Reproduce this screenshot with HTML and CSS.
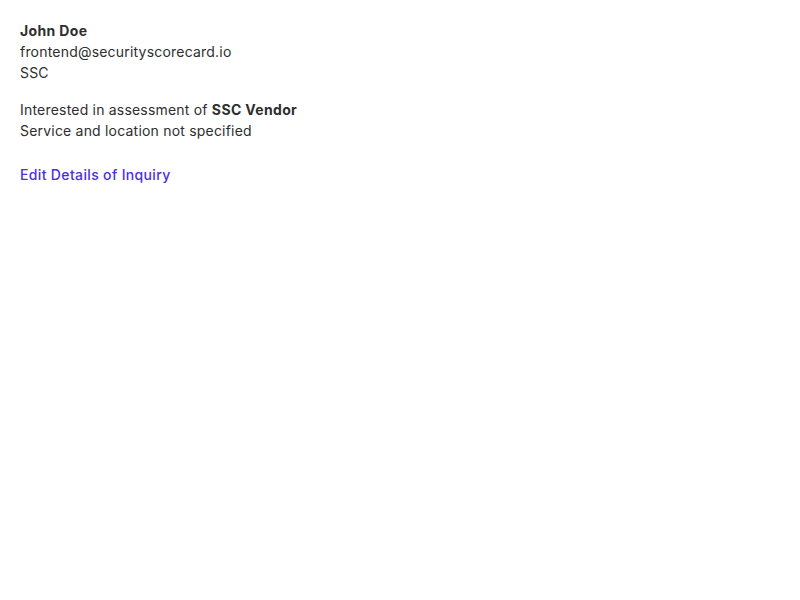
FILE: index.html
```html
<!DOCTYPE html>
<html>
<head>
<meta charset="utf-8">
<link rel="stylesheet" href="styles.css">
</head>
<body>
<div class="inquiry">
  <div class="contact">
    <div class="name">John Doe</div>
    <div>frontend@securityscorecard.io</div>
    <div>SSC</div>
  </div>
  <div class="details">
    <div>Interested in assessment of <strong>SSC Vendor</strong></div>
    <div>Service and location not specified</div>
  </div>
  <a class="edit-link" href="#">Edit Details of Inquiry</a>
</div>
</body>
</html>
```
FILE: styles.css
```css
html, body {
  margin: 0;
  padding: 0;
  background: #fff;
}
body {
  font-family: Inter, "Noto Sans", sans-serif;
  font-size: 14px;
  line-height: 21px;
  letter-spacing: 0.2px;
  color: #2e2e2e;
}
.inquiry {
  padding: 20px;
  display: flex;
  flex-direction: column;
  align-items: flex-start;
}
.name {
  font-weight: 700;
  letter-spacing: 0.35px;
}
.details {
  margin-top: 16px;
}
.details strong {
  font-weight: 700;
  letter-spacing: 0.35px;
}
.edit-link {
  margin-top: 23px;
  color: #4c2ee0;
  font-weight: 500;
  letter-spacing: 0.35px;
  text-decoration: none;
}
```
